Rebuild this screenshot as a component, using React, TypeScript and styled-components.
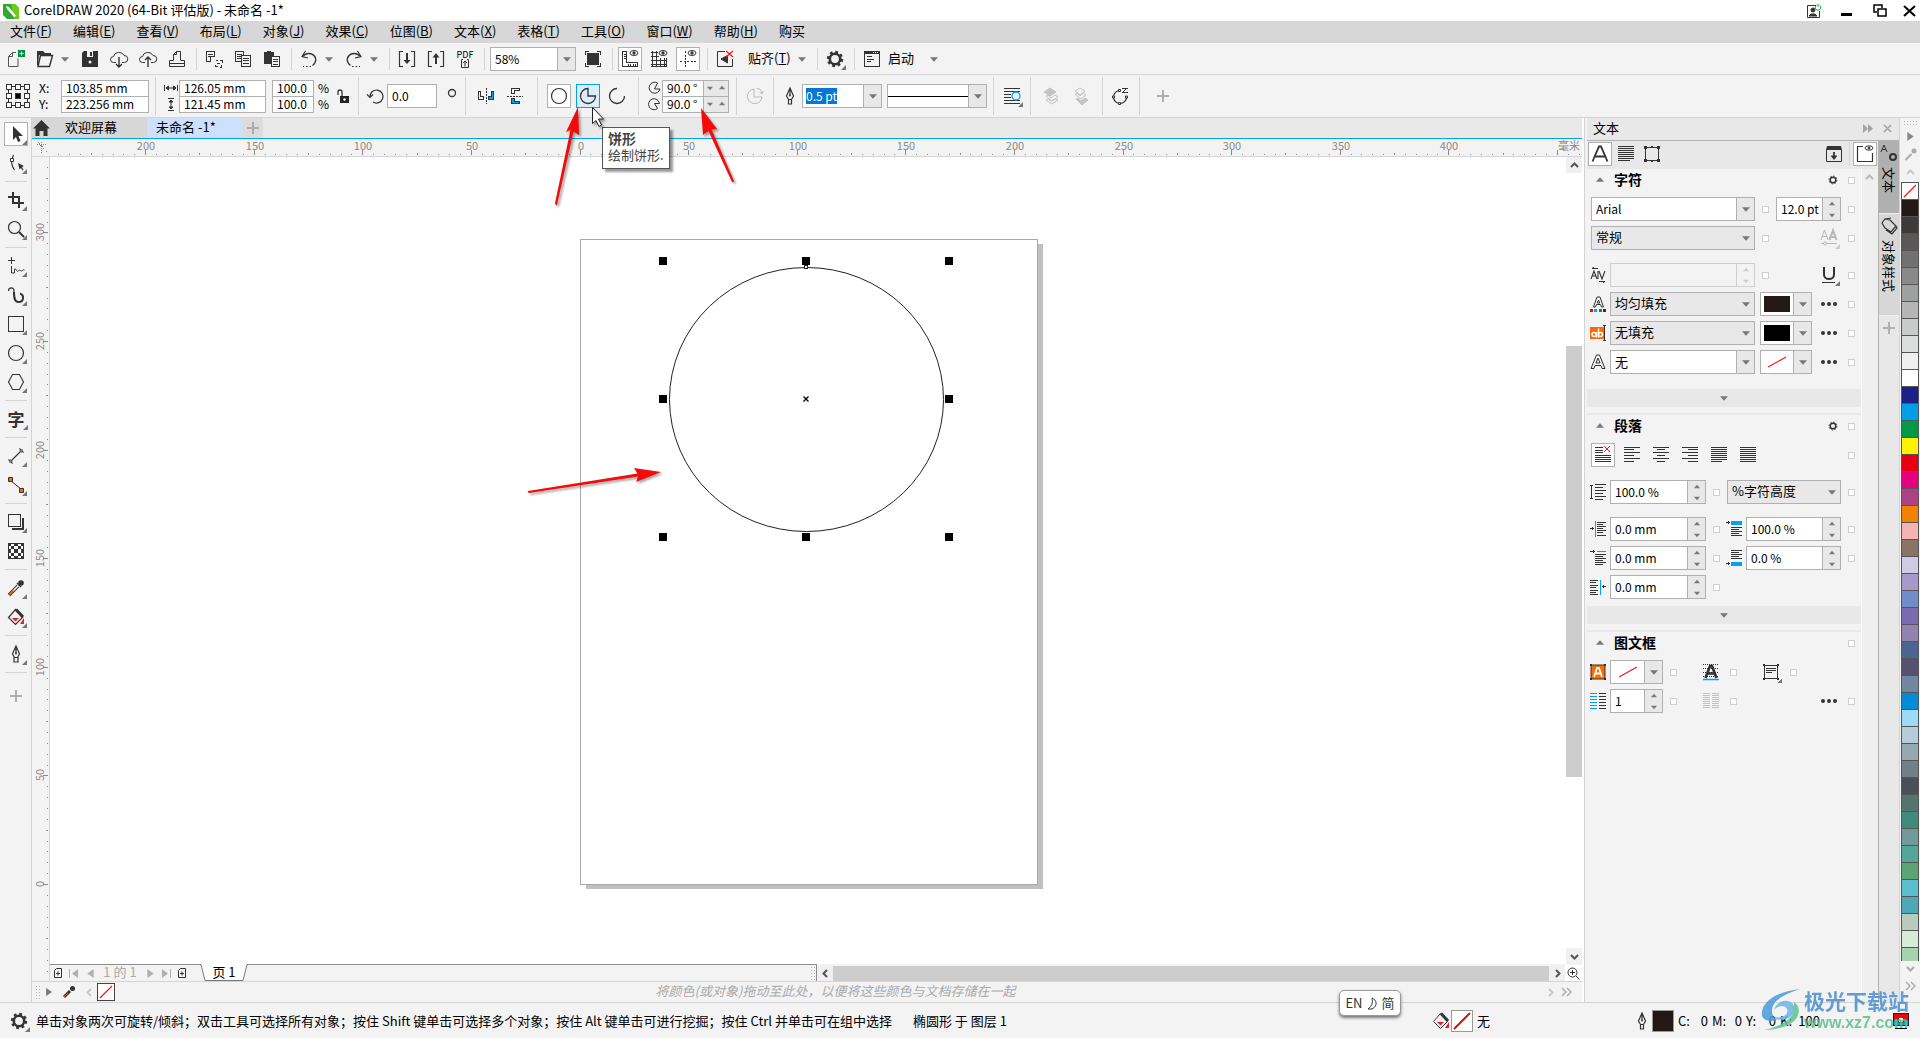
import React from 'react';
import styled, { createGlobalStyle, css } from 'styled-components';

const INK = '#333333';
const LINE = '#b0b0b0';
const RULE = '#d4d4d4';
const BAR = '#f3f3f3';
const SOFT = '#e8e8e8';
const BLUE = '#00a2f8';
const RED = '#ee1c1c';

const Global = createGlobalStyle`
  *, *::before, *::after { box-sizing: border-box; }
  body { margin: 0; background: ${BAR}; overflow: hidden; }
  body, button, input, select {
    font-family: "Noto Sans CJK SC", "Open Sans", sans-serif;
    font-size: 13px;
    line-height: 18px;
    color: #000;
  }
  button, input, select { margin: 0; padding: 0; border: 0; border-radius: 0; background: none; outline: none; }
  h1, h2, p { margin: 0; font-size: inherit; font-weight: inherit; }
  svg { display: block; flex: none; }
`;

const Shell = styled.div`
  position: relative;
  height: 100vh;
  display: flex;
  flex-direction: column;
  background: ${BAR};
  white-space: nowrap;
`;

/* ---------- icons ---------- */

type IconProps = { children: React.ReactNode; size?: number; crisp?: boolean; color?: string };
const Icon = ({ children, size = 24, crisp, color = INK }: IconProps) => (
  <svg
    width={size}
    height={size}
    viewBox={`0 0 ${size} ${size}`}
    fill="none"
    stroke={color}
    shapeRendering={crisp ? 'crispEdges' : undefined}
    aria-hidden="true"
  >
    {children}
  </svg>
);

const Corner = () => <path d="M23 18v5h-5z" fill="#777" stroke="none" />;

const lines = (rows: number[][], w = 1, c?: string) => (
  <path d={rows.map(([x, y, l]) => `M${x} ${y + 0.5}h${l}`).join('')} strokeWidth={w} stroke={c} />
);

const I = {
  newDoc: (
    <Icon>
      <path d="M12 5.500H8.500L4.500 9.500v10h9.500v-8M8.500 5.500v4h-4" stroke="#555" />
      <rect x="14" y="3" width="7" height="7" fill="#00923f" stroke="none" />
      <path d="M17.500 4.500v4M15.500 6.500h4" stroke="#fff" />
    </Icon>
  ),
  open: (
    <Icon>
      <path d="M4 4h6l2 2h6v2H6l-1 10H4z" fill={INK} stroke="none" />
      <path d="M7.500 8.500h12l-3 11H5z" fill={BAR} strokeWidth="1.400" />
    </Icon>
  ),
  save: (
    <Icon>
      <path d="M6 4h14v16H4V6z" fill={INK} stroke="none" />
      <rect x="9" y="4" width="6" height="6" fill={BAR} stroke="none" />
      <rect x="12" y="5" width="2" height="4" fill={INK} stroke="none" />
      <circle cx="12" cy="15" r="1.500" fill={BAR} stroke="none" />
    </Icon>
  ),
  cloudDown: (
    <Icon>
      <path d="M9 15.500H6.500a3 3 0 0 1 0-6 5.500 5 0 0 1 10.500-1 3.500 3.500 0 0 1 .5 7H15" />
      <path d="M12 10v10M9 17l3 3 3-3" strokeWidth="1.400" />
    </Icon>
  ),
  cloudUp: (
    <Icon>
      <path d="M9 15.500H6.500a3 3 0 0 1 0-6 5.500 5 0 0 1 10.500-1 3.500 3.500 0 0 1 .5 7H15" />
      <path d="M12 20V10M9 13l3-3 3 3" strokeWidth="1.400" />
    </Icon>
  ),
  print: (
    <Icon>
      <path d="M8.500 13.500v-6l3-3h4v9M8 13.500H4.500v6h15v-6H16M4.500 16.500h15M11.500 4.500v3h-3" />
    </Icon>
  ),
  cut: (
    <Icon crisp>
      <path d="M4.500 4.500h8v5h-4v5h-4zM6 7.500h5M6 9.500h3M13.500 13.500h2M18 13.500h2v2M19.500 18v2h-2M15.500 19.500h-2v-2M15 16.500h3" />
    </Icon>
  ),
  copy: (
    <Icon crisp>
      <path d="M4.500 4.500h8v10h-8zM6 7.500h5M6 9.500h5M6 11.500h5" />
      <path d="M10.500 8.500h9v11h-9z" fill={BAR} />
      <path d="M12 11.500h6M12 13.500h6M12 16.500h6" />
    </Icon>
  ),
  paste: (
    <Icon crisp>
      <path d="M4 5h3V4h4v1h3v12H4z" fill={INK} stroke="none" />
      <path d="M11.500 9.500h8v10h-8z" fill={BAR} />
      <path d="M13 12.500h5M13 14.500h5M13 17.500h5" />
    </Icon>
  ),
  undo: (
    <Icon>
      <path d="M6 9c3-3 8-3.500 11-.5 3.500 4 1 8.500-1.500 10" strokeWidth="1.400" />
      <path d="M8.500 4L5 9.500l6 1.500" strokeWidth="1.200" />
      <path d="M14 19.500H6" strokeDasharray="1.500 2" />
    </Icon>
  ),
  redo: (
    <Icon>
      <path d="M18 9c-3-3-8-3.500-11-.5-3.500 4-1 8.500 1.500 10" strokeWidth="1.400" />
      <path d="M15.500 4L19 9.500l-6 1.500" strokeWidth="1.200" />
      <path d="M10 19.500h8" strokeDasharray="1.500 2" />
    </Icon>
  ),
  importI: (
    <Icon>
      <path d="M8 4.500H4.500v15H8M16 4.500h3.500v15H16" strokeWidth="1.200" />
      <path d="M12 6v9" strokeWidth="2" />
      <path d="M8.500 13h7L12 17z" fill={INK} stroke="none" />
    </Icon>
  ),
  exportI: (
    <Icon>
      <path d="M8 4.500H4.500v15H8M16 4.500h3.500v15H16" strokeWidth="1.200" />
      <path d="M12 17V9" strokeWidth="2" />
      <path d="M8.500 10.500h7L12 6z" fill={INK} stroke="none" />
    </Icon>
  ),
  full: (
    <Icon crisp>
      <rect x="6" y="6" width="12" height="12" fill={INK} stroke="none" />
      <path d="M4.500 8V4.500H8M16 4.500h3.500V8M19.500 16v3.500H16M8 19.500H4.500V16" />
    </Icon>
  ),
  rulers: (
    <Icon>
      <path d="M4.500 4.500h4v11h11v4h-15zM6 7.500h2M6 9.500h2M6 11.500h2M10.500 17v2M12.500 17v2M15.500 17v2M17.500 17v2" shapeRendering="crispEdges" />
      <ellipse cx="16" cy="6" rx="4" ry="2.500" />
      <circle cx="16" cy="6" r="1.200" fill={INK} />
    </Icon>
  ),
  grid: (
    <Icon>
      <path d="M4 5.500h7M4 9.500h8M4 13.500h16M4 17.500h16M5.500 4v16M9.500 4v16M13.500 11v9M17.500 11v9M4 19.500h16M19.500 11v9" shapeRendering="crispEdges" />
      <ellipse cx="16" cy="6" rx="4" ry="2.500" />
      <circle cx="16" cy="6" r="1.200" fill={INK} />
    </Icon>
  ),
  guides: (
    <Icon>
      <path d="M9.500 4v16M4 14.500h16" strokeDasharray="2 1.500" shapeRendering="crispEdges" />
      <ellipse cx="16" cy="6" rx="4" ry="2.500" />
      <circle cx="16" cy="6" r="1.200" fill={INK} />
    </Icon>
  ),
  snapOff: (
    <Icon>
      <path d="M12 4.500H4.500v15h15V12" />
      <path d="M14.500 8.500L8 12l6.500 4z" fill={INK} />
      <path d="M13 4l7 6M20 4l-7 6" stroke={RED} strokeWidth="1.300" />
    </Icon>
  ),
  gear: (
    <Icon>
      <circle cx="12" cy="12" r="5.200" strokeWidth="2.600" />
      <circle cx="12" cy="12" r="7" strokeWidth="2.400" strokeDasharray="2.750 2.750" />
      <Corner />
    </Icon>
  ),
  launch: (
    <Icon crisp>
      <path d="M4.500 4.500h15v15h-15z" />
      <rect x="4" y="4" width="16" height="3" fill={INK} stroke="none" />
      <path d="M13 5.500h1M15 5.500h1M17 5.500h1" stroke="#fff" />
      <path d="M7 9.500h5M7 12.500h7M7 14.500h4" />
    </Icon>
  ),
  origin: (
    <Icon crisp>
      <path d="M2.500 2.500h19v19h-19z" />
      {[0, 9, 18].map((x) => [0, 9, 18].map((y) => (
        <rect key={`${x}-${y}`} x={x + 0.5} y={y + 0.5} width="5" height="5" fill={x === 9 && y === 9 ? '#000' : '#fff'} />
      )))}
    </Icon>
  ),
  lock: (
    <Icon>
      <rect x="9" y="12" width="9" height="7" fill="#222" stroke="none" />
      <path d="M7 11V8a2 2 0 0 1 4 0v4" strokeWidth="1.300" />
      <circle cx="13.500" cy="15.500" r="1.200" fill="#fff" stroke="none" />
    </Icon>
  ),
  rotate: (
    <Icon>
      <path d="M7 13a6.500 6.500 0 1 1 3 5" strokeWidth="1.200" />
      <path d="M4 10.500l3 3 3-3" strokeWidth="1.200" />
    </Icon>
  ),
  ring: <Icon><circle cx="12" cy="9" r="3.500" strokeWidth="1.300" /></Icon>,
  mirrorH: (
    <Icon crisp>
      <path d="M4.500 7.500h2v5h3v3h-5z" />
      <path d="M19.500 7.500h-2v5h-3v3h5z" fill={BLUE} />
      <path d="M12.500 4v16" strokeDasharray="2 1" />
    </Icon>
  ),
  mirrorV: (
    <Icon crisp>
      <path d="M8.500 4.500h8v2h-5v3h-3z" />
      <path d="M8.500 19.500h8v-2h-5v-3h-3z" fill={BLUE} />
      <path d="M4 12.500h16" strokeDasharray="2 1" />
    </Icon>
  ),
  ellipse: <Icon><circle cx="12" cy="12" r="7.500" strokeWidth="1.200" /></Icon>,
  pie: <Icon><path d="M12 4.500a7.500 7.500 0 1 0 7.500 7.500H12z" strokeWidth="1.300" /></Icon>,
  arc: <Icon><path d="M12 4.500a7.500 7.500 0 1 0 7.500 7.500" strokeWidth="1.300" /></Icon>,
  angA: <Icon size={16}><path d="M10.500 3a5.500 5.500 0 1 0 2.500 6H7.500z" /></Icon>,
  angB: <Icon size={16}><path d="M12.500 7.500a5.500 5.500 0 1 0-2 5L7.500 7.500z" /></Icon>,
  dir: (
    <Icon color="#bbb">
      <path d="M11 5a7.300 7.300 0 1 0 8 8h-8zM14 4.500c3 0 5 2 5 5M16.500 8l2.500 2 1.500-3" />
    </Icon>
  ),
  pen: (
    <Icon>
      <path d="M12 4l-3.500 8 2 3.500h3l2-3.500zM12 4v7M10.500 15.500h3V20h-3z" strokeWidth="1.200" />
      <circle cx="12" cy="11.500" r="1" fill={INK} stroke="none" />
    </Icon>
  ),
  wrap: (
    <Icon>
      <g shapeRendering="crispEdges">{lines([[4, 4, 16], [4, 7, 16], [4, 10, 7], [4, 13, 7], [4, 16, 16], [4, 19, 16]])}</g>
      <rect x="11" y="8" width="10" height="8" fill={BAR} stroke="none" />
      <circle cx="16" cy="12" r="4" stroke={BLUE} strokeWidth="1.300" />
      <Corner />
    </Icon>
  ),
  front: (
    <Icon color="#c4c4c4">
      <path d="M11 4l6 4-6 4-6-4z" fill="#c4c4c4" />
      <path d="M7 12l2-1 3 3 4-3 3 2-6 4zM7 16l2-1 3 2 4-2 3 1-6 4z" />
    </Icon>
  ),
  back: (
    <Icon color="#c4c4c4">
      <path d="M11 4l5 3-5 4-5-4zM6 10l2-1 3 3 3-3 3 2-5 4z" />
      <path d="M7 15l2-1 3 3 4-3 3 2-6 5z" fill="#c4c4c4" />
    </Icon>
  ),
  convert: (
    <Icon>
      <path d="M12 6.500a6.500 6.500 0 1 0 6.500 6.500" strokeWidth="1.200" />
      <path d="M14 4.500h6M14 8.500h6M15 8l4-4" />
      <path d="M10.500 5.500h2v2h-2zM4.500 12h2v2h-2zM10.500 18.500h2v2h-2zM17.500 12h2v2h-2z" fill={BAR} />
    </Icon>
  ),
  plus: <Icon color="#b0b0b0"><path d="M12 6v12M6 12h12" strokeWidth="2" /></Icon>,
  pick: (
    <Icon>
      <path d="M9 4v14l3-3 2 5 2.500-1-2-5H19z" fill={INK} stroke="none" />
      <Corner />
    </Icon>
  ),
  shape: (
    <Icon>
      <path d="M9.500 4c-2.500 5-2 11 1 15" strokeWidth="1.200" />
      <path d="M6.500 7.500h3v3h-3z" fill="#fff" />
      <path d="M14 12l6 3-2 1 1.500 3-1 .5-1.500-2.500-1.500 1.500z" fill={INK} stroke="none" />
      <Corner />
    </Icon>
  ),
  crop: (
    <Icon>
      <path d="M9 4v11h11M4 9h11v11" strokeWidth="2" shapeRendering="crispEdges" />
      <Corner />
    </Icon>
  ),
  zoom: (
    <Icon>
      <circle cx="10.500" cy="10.500" r="6" strokeWidth="1.200" />
      <path d="M15 15l5 5" strokeWidth="2" />
      <Corner />
    </Icon>
  ),
  freehand: (
    <Icon>
      <path d="M7.500 3v7M4 6.500h7M7.500 12v7h3v-4c2-1 2.500 4 4 2s2 0 3 0 2-2 3-1" />
      <Corner />
    </Icon>
  ),
  artistic: (
    <Icon>
      <path d="M4.500 8c0-4 5.500-4.500 5.500 0 0 2 0 3 .5 6" strokeWidth="1.200" />
      <path d="M10 9c0 6 .5 10 4.500 10 5.500 0 6-7 1.500-8.500" strokeWidth="2" />
      <Corner />
    </Icon>
  ),
  rect: <Icon><path d="M4.500 4.500h15v15h-15z" strokeWidth="1" shapeRendering="crispEdges" /><Corner /></Icon>,
  ell: <Icon><circle cx="12" cy="12" r="7.500" strokeWidth="1.200" /><Corner /></Icon>,
  poly: <Icon><path d="M8.500 4.500h7l4 7.500-4 7.500h-7L4.500 12z" strokeWidth="1.100" /><Corner /></Icon>,
  dim: (
    <Icon>
      <path d="M6 18L18 6M4.500 15.500l4 4M15.500 4.500l4 4" strokeWidth="1.100" />
      <path d="M5 19l1-4 3 3zM19 5l-4 1 3 3z" fill="#777" stroke="none" />
      <Corner />
    </Icon>
  ),
  conn: (
    <Icon>
      <path d="M7 8l10 8" />
      <path d="M4.500 4.500h4v4h-4zM15.500 15.500h4v4h-4z" fill="#ff6a00" />
      <Corner />
    </Icon>
  ),
  shadow: (
    <Icon>
      <path d="M19 8v11H8" strokeWidth="2" shapeRendering="crispEdges" />
      <path d="M4.500 4.500h12v12h-12z" shapeRendering="crispEdges" />
      <Corner />
    </Icon>
  ),
  checker: (
    <Icon crisp>
      <path d="M4.500 4.500h15v15h-15z" fill="#fff" />
      {[0, 1, 2, 3, 4].map((r) => [0, 1, 2, 3, 4].map((c) => ((r + c) % 2 === 0 ? (
        <rect key={`${r}${c}`} x={4 + c * 3.2} y={4 + r * 3.2} width="3.200" height="3.200" fill={INK} stroke="none" />
      ) : null)))}
    </Icon>
  ),
  dropper: (
    <Icon>
      <path d="M5 19l9-9" strokeWidth="3.500" />
      <path d="M9 15l6-6" stroke="#fff" strokeWidth="1.500" />
      <path d="M5.500 18.500l4-4" stroke="#e8641b" strokeWidth="2" />
      <circle cx="17" cy="7" r="2.800" fill={INK} stroke="none" />
      <path d="M13 7l4 4" strokeWidth="1.500" />
      <Corner />
    </Icon>
  ),
  bucket: (
    <Icon>
      <path d="M11.500 4.500l-7 8 7 7 7-7z" strokeWidth="1.200" />
      <path d="M12 4.500l7 7.500" strokeWidth="3" />
      <path d="M8 13h7l-3.500 3.500z" fill={RED} stroke="none" />
      <path d="M20 13v6h-4z" fill={RED} stroke="none" />
      <Corner />
    </Icon>
  ),
  outline: (
    <Icon>
      <path d="M12 4l-3.500 8 2 3.500h3l2-3.500zM12 4v7M10 15.500h4V20h-4z" strokeWidth="1.200" />
      <circle cx="12" cy="11.500" r="1" fill={INK} stroke="none" />
      <Corner />
    </Icon>
  ),
};

/* ---------- shared controls ---------- */

const IconButton = styled.button<{ $mode?: 'boxed' | 'hot'; $l?: number; $r?: number }>`
  width: 24px;
  height: 24px;
  flex: none;
  display: flex;
  align-items: center;
  justify-content: center;
  margin-left: ${(p) => p.$l ?? 0}px;
  margin-right: ${(p) => p.$r ?? 0}px;
  ${(p) => p.$mode && css`
    background: ${p.$mode === 'hot' ? '#dcedfb' : '#fff'};
    border: 1px solid ${p.$mode === 'hot' ? BLUE : LINE};
  `}
`;

const Sep = styled.span<{ $h: number; $l: number; $r: number }>`
  flex: none;
  width: 1px;
  height: ${(p) => p.$h}px;
  margin: 0 ${(p) => p.$r}px 0 ${(p) => p.$l}px;
  background: ${RULE};
`;

type Dir = 'up' | 'down' | 'left' | 'right';
const triPath: Record<Dir, string> = {
  down: 'M0 2h7L3.500 6z',
  up: 'M0 5h7L3.500 1z',
  left: 'M6 0v7L1 3.500z',
  right: 'M1 0v7l5-3.500z',
};
const Tri = ({ dir = 'down', size = 8, color = '#777' }: { dir?: Dir; size?: number; color?: string }) => (
  <svg width={size} height={size} viewBox="0 0 7 7" aria-hidden="true"><path d={triPath[dir]} fill={color} /></svg>
);

const chev: Record<Dir, string> = {
  down: 'M1 3l3.500 3.500L8 3',
  up: 'M1 6l3.500-3.500L8 6',
  left: 'M6 1L2.500 4.500 6 8',
  right: 'M3 1l3.500 3.500L3 8',
};
const Chevron = ({ dir, color = '#555' }: { dir: Dir; color?: string }) => (
  <svg width="9" height="9" viewBox="0 0 9 9" fill="none" stroke={color} strokeWidth="2" aria-hidden="true"><path d={chev[dir]} /></svg>
);

const Arrow = styled.button<{ $r?: number }>`
  width: 16px;
  height: 20px;
  flex: none;
  margin-right: ${(p) => p.$r ?? 5}px;
  display: flex;
  align-items: center;
  justify-content: center;
`;

const Box = styled.span<{ $w: number; $muted?: boolean; $flat?: boolean }>`
  flex: none;
  width: ${(p) => p.$w}px;
  height: 24px;
  display: flex;
  align-items: stretch;
  background: ${(p) => (p.$flat ? BAR : p.$muted ? SOFT : '#fff')};
  border: 1px solid ${(p) => (p.$flat ? '#cfcfcf' : LINE)};
`;

const TextInput = styled.input<{ $size?: number }>`
  flex: 1;
  width: 0;
  min-width: 0;
  padding-left: 4px;
  font-size: ${(p) => p.$size ?? 12}px;
`;

const Drop = styled.button`
  width: 18px;
  flex: none;
  background: ${SOFT};
  border-left: 1px solid ${LINE};
  display: flex;
  align-items: center;
  justify-content: center;
`;

const Spin = styled.span<{ $faint?: boolean }>`
  width: 18px;
  flex: none;
  display: flex;
  flex-direction: column;
  background: ${(p) => (p.$faint ? BAR : SOFT)};
  border-left: 1px solid ${(p) => (p.$faint ? '#cfcfcf' : LINE)};
  button { flex: 1; display: flex; align-items: center; justify-content: center; }
`;

const SelectEl = styled.select`
  appearance: none;
  flex: 1;
  min-width: 0;
  padding: 0 0 2px 4px;
  margin-right: -16px;
`;
const SelectArrow = styled.span`
  width: 16px;
  display: flex;
  align-items: center;
  justify-content: center;
  pointer-events: none;
`;

const Select = ({ w, label, value }: { w: number; label: string; value: string }) => (
  <Box $w={w} $muted>
    <SelectEl aria-label={label} defaultValue={value}><option>{value}</option></SelectEl>
    <SelectArrow><Tri /></SelectArrow>
  </Box>
);

const Combo = ({ w, label, value, size }: { w: number; label: string; value: string; size?: number }) => (
  <Box $w={w}>
    <TextInput aria-label={label} defaultValue={value} $size={size} />
    <Drop aria-label={`${label} 列表`}><Tri /></Drop>
  </Box>
);

const Spinner = ({ w, label, value, disabled }: { w: number; label: string; value: string; disabled?: boolean }) => (
  <Box $w={w} $flat={disabled}>
    <TextInput aria-label={label} defaultValue={value} disabled={disabled} />
    <Spin $faint={disabled}>
      <button aria-label={`${label} +`}><Tri dir="up" size={6} color={disabled ? '#ccc' : '#777'} /></button>
      <button aria-label={`${label} -`}><Tri size={6} color={disabled ? '#ccc' : '#777'} /></button>
    </Spin>
  </Box>
);

const Stack = styled.span<{ $w: number }>`
  flex: none;
  width: ${(p) => p.$w}px;
  height: 33px;
  display: flex;
  flex-direction: column;
  background: #fff;
  border: 1px solid ${LINE};
  > * { flex: 1; min-height: 0; width: 100%; }
  > * + * { border-top: 1px solid ${LINE}; }
`;

const SideLabels = styled.span<{ $w: number; $l?: number }>`
  flex: none;
  width: ${(p) => p.$w}px;
  height: 32px;
  margin-left: ${(p) => p.$l ?? 0}px;
  display: flex;
  flex-direction: column;
  font-size: 12px;
  line-height: 16px;
`;

const AngleRow = styled.span`
  display: flex;
  button { width: 12px; background: ${SOFT}; display: flex; align-items: center; justify-content: center; }
  button:first-of-type { border-left: 1px solid ${LINE}; width: 13px; }
`;

/* ---------- title, menu, toolbars ---------- */

const TitleBar = styled.header`
  height: 21px;
  flex: none;
  display: flex;
  align-items: center;
  gap: 5px;
  padding: 0 2px 0 3px;
  background: #fff;
  > span { padding-bottom: 1px; }
`;
const WindowButtons = styled.div`
  margin-left: auto;
  display: flex;
  align-items: center;
  gap: 15px;
  button { width: 18px; height: 20px; display: flex; align-items: center; justify-content: center; }
  button:last-child { margin-left: -4px; }
`;

const MenuBar = styled.nav`
  height: 22px;
  flex: none;
  display: flex;
  align-items: center;
  padding: 0 0 2px 10px;
  gap: 21px;
  background: #d7d7d7;
`;

const ToolBar = styled.div`
  height: 32px;
  flex: none;
  display: flex;
  align-items: center;
  padding-left: 4px;
  border-bottom: 1px solid ${RULE};
`;
const TextButton = styled.button<{ $w: number }>`
  width: ${(p) => p.$w}px;
  height: 24px;
  flex: none;
  padding-bottom: 2px;
  text-align: left;
`;
const PdfGlyph = styled.span`
  display: flex;
  flex-direction: column;
  align-items: center;
  font-size: 9px;
  line-height: 9px;
`;

const PropBar = styled.div`
  height: 43px;
  flex: none;
  display: flex;
  align-items: center;
  padding-left: 6px;
  border-bottom: 1px solid ${RULE};
`;
const SelectedInput = styled.input`
  width: 31px;
  height: 16px;
  align-self: center;
  margin: 0 auto 0 3px;
  font-size: 12px;
  line-height: 16px;
  background: #0078d7;
  color: #fff;
`;
const LineSample = styled.span`
  flex: 1;
  height: 1px;
  align-self: center;
  background: #000;
`;

const menus: [string, string?][] = [
  ['文件', 'F'], ['编辑', 'E'], ['查看', 'V'], ['布局', 'L'], ['对象', 'J'], ['效果', 'C'], ['位图', 'B'],
  ['文本', 'X'], ['表格', 'T'], ['工具', 'O'], ['窗口', 'W'], ['帮助', 'H'], ['购买'],
];

const B = ({ name, icon, mode, l, r = 5 }: { name: string; icon: React.ReactNode; mode?: 'boxed' | 'hot'; l?: number; r?: number }) => (
  <IconButton aria-label={name} $mode={mode} $l={l} $r={r}>{icon}</IconButton>
);
const TSep = () => <Sep $h={22} $l={2} $r={5} />;

const Logo = () => (
  <svg width="16" height="16" viewBox="0 0 16 16" aria-hidden="true">
    <path d="M0 1h12l4 4v11H4l-4-4z" fill="#2faa2f" />
    <path d="M8 1h4l4 4v11h-5z" fill="#6fca1f" />
    <path d="M3 3l3 1 7 9-2 1-7-8z" fill="#fff" />
  </svg>
);

const StandardBar = () => (
  <ToolBar>
    <B name="新建" icon={I.newDoc} />
    <B name="打开" icon={I.open} r={0} />
    <Arrow aria-label="打开选项"><Tri /></Arrow>
    <B name="保存" icon={I.save} />
    <B name="云下载" icon={I.cloudDown} />
    <B name="云上传" icon={I.cloudUp} />
    <B name="打印" icon={I.print} />
    <TSep />
    <B name="剪切" icon={I.cut} />
    <B name="复制" icon={I.copy} />
    <B name="粘贴" icon={I.paste} />
    <TSep />
    <B name="撤消" icon={I.undo} r={0} />
    <Arrow aria-label="撤消列表"><Tri /></Arrow>
    <B name="重做" icon={I.redo} r={0} />
    <Arrow aria-label="重做列表"><Tri /></Arrow>
    <TSep />
    <B name="导入" icon={I.importI} />
    <B name="导出" icon={I.exportI} />
    <IconButton aria-label="发布为 PDF" $r={5}>
      <PdfGlyph>
        PDF
        <svg width="8" height="9" viewBox="0 0 8 9" fill="none" stroke={INK}><path d="M2 .5H.5v8h7v-8H6M4 7.500V2M2 4l2-2 2 2" /></svg>
      </PdfGlyph>
    </IconButton>
    <TSep />
    <Combo w={86} label="缩放级别" value="58%" size={12} />
    <B name="全屏预览" icon={I.full} l={5} />
    <TSep />
    <B name="显示标尺" icon={I.rulers} mode="boxed" />
    <B name="显示网格" icon={I.grid} />
    <B name="显示辅助线" icon={I.guides} mode="boxed" />
    <TSep />
    <B name="关闭贴齐" icon={I.snapOff} r={11} />
    <TextButton $w={46}>贴齐(<u>T</u>)</TextButton>
    <Arrow aria-label="贴齐列表"><Tri /></Arrow>
    <TSep />
    <B name="选项" icon={I.gear} />
    <TSep />
    <B name="启动器" icon={I.launch} r={4} />
    <TextButton $w={38}>启动</TextButton>
    <Arrow aria-label="启动列表"><Tri /></Arrow>
  </ToolBar>
);

const PropertyBar = () => (
  <PropBar>
    <B name="对象原点" icon={I.origin} r={9} />
    <SideLabels $w={22}><span>X:</span><span>Y:</span></SideLabels>
    <Stack $w={88}>
      <TextInput aria-label="X" defaultValue="103.85 mm" />
      <TextInput aria-label="Y" defaultValue="223.256 mm" />
    </Stack>
    <Sep $h={38} $l={6} $r={8} />
    <SideLabels $w={15}>
      <svg width="14" height="16" viewBox="0 0 14 16" stroke={INK} fill={INK}><path d="M.5 5v6M13.500 5v6M2 8h10M4.500 6v4L2 8zM9.500 6v4L12 8z" /></svg>
      <svg width="14" height="16" viewBox="0 0 14 16" stroke={INK} fill={INK}><path d="M4 2.500h6M4 14.500h6M7 4v9M5 6h4L7 4zM5 11h4l-2 2z" /></svg>
    </SideLabels>
    <Stack $w={87}>
      <TextInput aria-label="宽度" defaultValue="126.05 mm" />
      <TextInput aria-label="高度" defaultValue="121.45 mm" />
    </Stack>
    <Sep $h={0} $l={5} $r={0} />
    <Stack $w={42}>
      <TextInput aria-label="水平缩放" defaultValue="100.0" />
      <TextInput aria-label="垂直缩放" defaultValue="100.0" />
    </Stack>
    <SideLabels $w={13} $l={4}><span>%</span><span>%</span></SideLabels>
    <B name="锁定比率" icon={I.lock} r={0} />
    <Sep $h={38} $l={3} $r={4} />
    <B name="旋转" icon={I.rotate} r={0} />
    <Box $w={50}><TextInput aria-label="旋转角度" defaultValue="0.0" /></Box>
    <B name="角度" icon={I.ring} l={3} r={0} />
    <Sep $h={38} $l={1} $r={8} />
    <B name="水平镜像" icon={I.mirrorH} />
    <B name="垂直镜像" icon={I.mirrorV} r={0} />
    <Sep $h={38} $l={10} $r={9} />
    <B name="椭圆形" icon={I.ellipse} mode="boxed" />
    <B name="饼形" icon={I.pie} mode="hot" />
    <B name="弧" icon={I.arc} r={0} />
    <Sep $h={38} $l={9} $r={8} />
    <SideLabels $w={15}>{I.angA}{I.angB}</SideLabels>
    <Stack $w={67}>
      {['起始角度', '结束角度'].map((n) => (
        <AngleRow key={n}>
          <TextInput aria-label={n} defaultValue="90.0 °" />
          <button aria-label={`${n} -`}><Tri size={6} /></button>
          <button aria-label={`${n} +`}><Tri size={6} dir="up" /></button>
        </AngleRow>
      ))}
    </Stack>
    <Sep $h={38} $l={7} $r={6} />
    <B name="更改方向" icon={I.dir} r={0} />
    <Sep $h={38} $l={6} $r={4} />
    <B name="轮廓笔" icon={I.pen} r={0} />
    <Box $w={80}>
      <SelectedInput aria-label="轮廓宽度" defaultValue="0.5 pt" />
      <Drop aria-label="轮廓宽度列表"><Tri /></Drop>
    </Box>
    <Sep $h={0} $l={4} $r={0} />
    <Box $w={100}><LineSample /><Drop aria-label="线条样式"><Tri /></Drop></Box>
    <Sep $h={38} $l={6} $r={6} />
    <B name="文本换行" icon={I.wrap} r={0} />
    <Sep $h={38} $l={6} $r={8} />
    <B name="到图层前面" icon={I.front} r={6} />
    <B name="到图层后面" icon={I.back} r={0} />
    <Sep $h={38} $l={9} $r={5} />
    <B name="转换为曲线" icon={I.convert} r={0} />
    <Sep $h={38} $l={7} $r={11} />
    <B name="自定义" icon={I.plus} />
  </PropBar>
);

/* ---------- workspace ---------- */

const Workspace = styled.div`
  flex: 1;
  min-height: 0;
  display: flex;
  border-bottom: 1px solid ${RULE};
`;

const Toolbox = styled.aside`
  width: 32px;
  flex: none;
  padding: 4px 3px 0 4px;
  border-right: 1px solid ${RULE};
  display: flex;
  flex-direction: column;
  gap: 5px;
  > button:last-child { margin-top: 5px; }
`;
const ToolSep = styled.span`
  height: 1px;
  flex: none;
  margin: 1px 0 1px 1px;
  width: 22px;
  background: ${RULE};
`;
const TextGlyph = styled.span`
  position: relative;
  font-size: 17px;
  font-weight: 700;
  line-height: 24px;
  color: ${INK};
  svg { position: absolute; left: -3px; top: 0; }
`;

const Center = styled.main`
  flex: 1;
  min-width: 0;
  display: flex;
  flex-direction: column;
`;

const DocTabs = styled.div`
  height: 21px;
  flex: none;
  display: flex;
  background: #e9e9e9;
  border-bottom: 1px solid ${BLUE};
  button { height: 20px; text-align: left; background: #d7d7d7; }
`;
const HomeTab = styled.button` width: 24px; padding-left: 1px; `;
const Tab = styled.button<{ $w: number; $on?: boolean }>`
  && { background: ${(p) => (p.$on ? '#cde1ff' : '#d7d7d7')}; }
  width: ${(p) => p.$w}px;
  padding: 0 0 2px 9px;
`;
const AddTab = styled.button`
  && { background: #dcdcdc; }
  width: 21px;
  svg { margin: 0 auto; }
`;

const RulerRow = styled.div`
  height: 18px;
  flex: none;
  border-bottom: 1px solid ${RULE};
  svg { overflow: visible; }
`;
const RulerText = styled.text`
  font-size: 11px;
  fill: #8a8a8a;
  stroke: none;
  text-anchor: middle;
`;
const Stage = styled.div`
  flex: 1;
  min-height: 0;
  display: flex;
`;
const VRuler = styled.div`
  width: 18px;
  flex: none;
  border-right: 1px solid ${RULE};
`;
const StageMain = styled.div`
  flex: 1;
  min-width: 0;
  display: flex;
  flex-direction: column;
`;
const CanvasRow = styled.div`
  flex: 1;
  min-height: 0;
  display: flex;
  background: #fff;
`;
const Canvas = styled.div`
  flex: 1;
  min-width: 0;
  overflow: hidden;
`;
const VScroll = styled.div`
  width: 16px;
  flex: none;
  display: flex;
  flex-direction: column;
`;
const ScrollButton = styled.button`
  width: 16px;
  height: 16px;
  flex: none;
  display: flex;
  align-items: center;
  justify-content: center;
  background: #f0f0f0;
`;
const VTrack = styled.div`
  flex: 1;
  display: flex;
  flex-direction: column;
  &::before { content: ''; flex: 173; }
  &::after { content: ''; flex: 171; }
  i { flex: 430; background: #cdcdcd; }
`;

const PageBar = styled.div`
  height: 17px;
  flex: none;
  display: flex;
`;
const PageNav = styled.div`
  width: 767px;
  flex: none;
  display: flex;
  align-items: center;
  border-top: 1px solid #8c8c8c;
  border-right: 1px solid #8c8c8c;
  button { width: 16px; height: 16px; flex: none; display: flex; align-items: center; justify-content: center; }
`;
const PageCount = styled.span`
  width: 44px;
  padding-bottom: 2px;
  text-align: center;
  line-height: 14px;
  color: #aaa;
`;
const PageTab = styled.button`
  && { width: 48px; margin: -1px 0 0 10px; height: 17px; }
  position: relative;
  svg { position: absolute; left: 0; top: 0; }
  span { position: relative; padding-bottom: 2px; line-height: 14px; }
`;
const HThumb = styled.i`
  flex: 1;
  height: 15px;
  background: #cdcdcd;
`;
const HScroll = styled.div`
  flex: 1;
  display: flex;
  align-items: flex-end;
`;
const Navigator = styled.button`
  width: 17px;
  height: 16px;
  background: #fff;
  display: flex;
  align-items: center;
  justify-content: center;
`;

const ColorRow = styled.div`
  height: 21px;
  flex: none;
  display: flex;
  align-items: center;
  border-top: 1px solid ${RULE};
  padding: 0 10px 0 3px;
  p { flex: 1; padding: 0 0 2px 14px; text-align: center; font-style: italic; color: #aaa; }
`;
const DropperButton = styled.button`
  width: 24px;
  height: 20px;
  flex: none;
  display: flex;
  align-items: center;
  justify-content: center;
`;
const Grip = styled.span`
  width: 6px;
  height: 15px;
  flex: none;
  background: radial-gradient(circle, #b4b4b4 1px, transparent 1px) 0 0 / 3px 3px;
`;
const NoneSwatch = styled.button`
  width: 18px;
  height: 18px;
  flex: none;
  background: #fff;
  border: 1px solid #444;
`;
const Slash = ({ w, h, color = RED, sw = 1.2 }: { w: number; h: number; color?: string; sw?: number }) => (
  <svg width={w} height={h} viewBox={`0 0 ${w} ${h}`} stroke={color} strokeWidth={sw} aria-hidden="true"><path d={`M2 ${h - 2}L${w - 2} 2`} /></svg>
);

const STEP = 10.86;

const HRuler = () => {
  const zero = 548.5;
  const ticks = Array.from({ length: 144 }, (_, i) => i - 48).filter((i) => zero + i * STEP > 22 && i < 93);
  return (
    <svg width="100%" height="17" stroke="#8a8a8a" shapeRendering="crispEdges">
      <path d="M5 5.500h9M9.500 3v12M6 3l9 10" strokeDasharray="1 1" />
      {ticks.map((i) => {
        const x = Math.round(zero + i * STEP) - 0.5;
        const major = i % 10 === 0;
        return <path key={i} d={`M${x} ${major ? 11 : i % 5 === 0 ? 14 : 15}V16`} />;
      })}
      {ticks.filter((i) => i % 10 === 0 && i < 90).map((i) => (
        <RulerText key={i} x={Math.round(zero + i * STEP)} y="11">{Math.abs(i * 5)}</RulerText>
      ))}
      <RulerText x="1537" y="11">毫米</RulerText>
    </svg>
  );
};

const VerticalRuler = () => {
  const zero = 727;
  const ticks = Array.from({ length: 80 }, (_, i) => i - 8).filter((i) => zero - i * STEP > 6);
  return (
    <svg width="17" height="100%" stroke="#8a8a8a" shapeRendering="crispEdges">
      {ticks.map((i) => {
        const y = Math.round(zero - i * STEP) + 0.5;
        return <path key={i} d={`M${i % 10 === 0 ? 11 : i % 5 === 0 ? 14 : 15} ${y}H16`} />;
      })}
      {ticks.filter((i) => i % 10 === 0).map((i) => {
        const y = Math.round(zero - i * STEP);
        return <RulerText key={i} transform={`translate(12 ${y}) rotate(-90)`}>{Math.abs(i * 5)}</RulerText>;
      })}
    </svg>
  );
};

const Drawing = () => (
  <svg width="100%" height="100%">
    <rect x="536" y="87" width="457" height="645" fill="#c0c0c0" />
    <rect x="530.5" y="82.5" width="457" height="645" fill="#fff" stroke="#a8a8a8" />
    <ellipse cx="756.5" cy="242.5" rx="137" ry="132" fill="none" stroke="#222" />
    <rect x="754.5" y="108.5" width="3" height="3" fill="#fff" stroke="#222" />
    {[609, 752, 895].map((x) => [100, 238, 376].map((y) => (
      x === 752 && y === 238 ? null : <rect key={`${x}-${y}`} x={x} y={y} width="8" height="8" fill="#000" />
    )))}
    <path d="M753.500 239.500l5 5M758.500 239.500l-5 5" stroke="#000" strokeWidth="1.300" />
  </svg>
);

const tools: (keyof typeof I | '|' | '字')[] = [
  'pick', 'shape', '|', 'crop', 'zoom', '|', 'freehand', 'artistic', 'rect', 'ell', 'poly', '|', '字', '|',
  'dim', 'conn', '|', 'shadow', 'checker', '|', 'dropper', 'bucket', '|', 'outline', '|', 'plus',
];

/* ---------- docker ---------- */

const DockerWrap = styled.aside`
  width: 317px;
  flex: none;
  display: flex;
  flex-direction: column;
  border-left: 2px solid #fff;
  box-shadow: inset 1px 0 0 ${RULE};
  padding-left: 3px;
`;
const DockerHead = styled.header`
  height: 23px;
  flex: none;
  display: flex;
  align-items: center;
  padding: 0 7px 2px 6px;
  gap: 9px;
  background: ${SOFT};
  border-bottom: 1px solid ${LINE};
  h1 { flex: 1; }
`;
const DockerBody = styled.div`
  flex: 1;
  min-height: 0;
  display: flex;
`;
const DockerMain = styled.div`
  flex: 1;
  min-width: 0;
  display: flex;
  flex-direction: column;
  border-right: 1px solid ${LINE};
`;
const ModeBar = styled.div`
  height: 28px;
  flex: none;
  display: flex;
  align-items: flex-start;
  padding: 1px 1px 0;
  background: ${SOFT};
`;
const Push = styled.span` flex: 1; `;
const ScrollArea = styled.div`
  flex: 1;
  min-height: 0;
  display: flex;
`;
const Sections = styled.div`
  flex: 1;
  min-width: 0;
  border-right: 1px solid #fff;
`;
const InnerScroll = styled.div`
  width: 16px;
  flex: none;
  padding: 4px 0 0 3px;
  background: #efefef;
`;
const SectionHead = styled.div`
  height: 22px;
  display: flex;
  align-items: center;
  padding: 0 6px 0 9px;
  gap: 10px;
  h2 { flex: 1; padding-bottom: 2px; font-size: 14px; font-weight: 700; line-height: 20px; }
`;
const Row = styled.div<{ $t?: number; $gap?: number }>`
  height: 24px;
  margin-top: ${(p) => p.$t ?? 5}px;
  padding: 0 6px 0 4px;
  display: flex;
  align-items: center;
  gap: ${(p) => p.$gap ?? 7}px;
`;
const Mark = styled.input.attrs({ type: 'checkbox' })`
  appearance: none;
  width: 7px;
  height: 7px;
  flex: none;
  background: #fff;
  border: 1px solid #d0d0d0;
`;
const End = styled.span`
  margin-left: auto;
  display: flex;
  align-items: center;
  gap: 7px;
`;
const Labeled = styled.span`
  flex: none;
  display: flex;
  align-items: center;
  > svg:first-child { margin: 0 4px 0 -1px; }
`;
const Fold = styled.button<{ $t: number }>`
  display: flex;
  align-items: center;
  justify-content: center;
  width: 100%;
  height: 18px;
  margin-top: ${(p) => p.$t}px;
  background: ${SOFT};
`;
const Divider = styled.div`
  height: 2px;
  margin-top: 6px;
  background: ${SOFT};
`;
const Swatch = styled.span<{ $c?: string }>`
  flex: 1;
  margin: 3px;
  background: ${(p) => p.$c ?? '#fff'};
  svg { margin: 1px auto 0; }
`;
const DockerTabs = styled.div`
  width: 20px;
  flex: none;
  display: flex;
  flex-direction: column;
  background: ${SOFT};
`;
const SideTab = styled.button<{ $h: number; $on?: boolean }>`
  height: ${(p) => p.$h}px;
  flex: none;
  padding-top: 3px;
  display: flex;
  flex-direction: column;
  align-items: center;
  gap: 5px;
  background: ${(p) => (p.$on ? '#b0b0b0' : '#d7d7d7')};
  border-bottom: 1px solid #eee;
  span { writing-mode: vertical-rl; text-orientation: sideways; line-height: 20px; }
`;
const FrameCell = styled.span`
  display: flex;
  align-items: center;
  gap: 7px;
  margin-left: 15px;
`;

const ColorDrop = ({ label, color, w = 52 }: { label: string; color?: string; w?: number }) => (
  <Box $w={w}>
    <Swatch $c={color}>{!color && <Slash w={22} h={14} />}</Swatch>
    <Drop aria-label={label}><Tri /></Drop>
  </Box>
);
const Dots = () => (
  <IconButton aria-label="更多">
    <Icon>{[6, 12, 18].map((x) => <circle key={x} cx={x} cy="12" r="2" fill={INK} stroke="none" />)}</Icon>
  </IconButton>
);
const TinyGear = () => (
  <svg width="10" height="10" viewBox="0 0 10 10" fill="none" stroke={INK}><circle cx="5" cy="5" r="2.800" strokeWidth="1.400" /><circle cx="5" cy="5" r="3.900" strokeDasharray="1.500 1.500" /></svg>
);

const P = {
  kern: <Icon size={16}><path d="M1 12L4 4l3 8M2 9h4M8 4l0 8M9 4l3 8 3-8" strokeWidth="1.100" /><path d="M2 1.500h6M2 1.500l2-1.500M9 14.500h6M15 14.500l-2 1.500" /></Icon>,
  fill: <Icon size={16}><path d="M7 1h3l3.500 10h-2l-1-2.500h-4l-1 2.500h-2zM8.500 4L7.200 7h2.600z" /><path d="M0 13h3v3H0z" fill="red" stroke="none" /><path d="M4 13h3v3H4z" fill="#00a2f8" stroke="none" /><path d="M9 13h3v3H9z" fill="#00923f" stroke="none" /><path d="M13 13h3v3h-3z" fill={INK} stroke="none" /></Icon>,
  back: <Icon size={16}><rect y="2" width="14" height="12" fill="#ff6a00" stroke="none" /><circle cx="4" cy="9.500" r="2" stroke="#fff" strokeWidth="1.500" /><path d="M6.500 7v5.500M8.500 3.500v9" stroke="#fff" strokeWidth="1.500" /><circle cx="10.500" cy="9.500" r="2" stroke="#fff" strokeWidth="1.500" /><path d="M14.500 1v14M13 .5h3M13 15.500h3" /></Icon>,
  outA: <Icon size={16}><path d="M6.500 1h3L15 14.500h-3l-1-3H5l-1 3H1zM8 4L6 9h4z" /></Icon>,
  lead: <Icon size={16} crisp><path d="M1.500 1v14M0 1.500h3M0 14.500h3" />{lines([[5, 0, 11], [5, 3, 8], [5, 6, 11], [5, 9, 8], [5, 12, 11], [5, 15, 8]])}</Icon>,
  indL: <Icon size={16} crisp><path d="M0 7.500h4M2.500 6v3" /><path d="M5.500 0v16" stroke={BLUE} />{lines([[7, 1, 9], [7, 3, 6], [7, 5, 9], [7, 7, 6], [7, 9, 9], [7, 11, 6], [7, 14, 9]])}</Icon>,
  indF: <Icon size={16} crisp><path d="M0 1.500h5M3.500 0v3" />{lines([[7, 1, 9]], 1, BLUE)}{lines([[5, 4, 11], [5, 6, 8], [5, 8, 11], [5, 10, 8], [5, 12, 11], [5, 14, 8]])}</Icon>,
  indR: <Icon size={16} crisp><path d="M12 7.500h4M13.500 6v3" /><path d="M10.500 1v15" stroke={BLUE} />{lines([[0, 1, 8], [0, 3, 6], [0, 6, 8], [0, 8, 6], [0, 11, 8], [0, 13, 6], [0, 15, 8]])}</Icon>,
  before: <Icon size={16} crisp><path d="M0 1.500h4M2.500 0v3" /><rect x="5" y="0" width="11" height="4" fill={BLUE} stroke="none" />{lines([[5, 6, 11], [5, 8, 8], [5, 10, 11], [5, 12, 8], [5, 14, 11]])}</Icon>,
  after: <Icon size={16} crisp><path d="M0 13.500h4M2.500 12v3" /><rect x="5" y="12" width="11" height="4" fill={BLUE} stroke="none" />{lines([[5, 0, 11], [5, 2, 8], [5, 4, 11], [5, 6, 8], [5, 8, 11]])}</Icon>,
  frameFill: <Icon size={16}><rect x="1" y="1" width="14" height="14" fill="#ff6a00" stroke={INK} /><path d="M4 13l3-9h2l3 9M5.500 9.500h5" stroke="#fff" strokeWidth="1.800" /><path d="M0 0h2v2H0zM14 0h2v2h-2zM0 14h2v2H0zM14 14h2v2h-2z" fill={INK} stroke="none" /></Icon>,
  cols: <Icon size={16} crisp>{lines([0, 3, 6, 9, 12, 15].map((y) => [0, y, 7]), 1, BLUE)}{lines([0, 3, 6, 9, 12, 15].map((y) => [9, y, 7]))}</Icon>,
};

/* 0 left, 1 centre, 2 right, 3 justified, 4 fully justified */
const align = (kind: number) => {
  const ys = kind < 3 ? [4, 6, 9, 12, 15, 18] : [4, 6, 8, 10, 12, 14, 16, 18];
  const rows = ys.map((y, i) => {
    const short = i % 2 === 1;
    if (kind === 0) return [4, y, short ? 10 : 16];
    if (kind === 1) return [short ? 8 : 4, y, short ? 8 : 16];
    if (kind === 2) return [short ? 10 : 4, y, short ? 10 : 16];
    return [4, y, kind === 3 && i === 7 ? 11 : 16];
  });
  return <Icon crisp>{lines(rows)}</Icon>;
};

const SwatchRow = ({ icon, field, label, color }: { icon: React.ReactNode; field: React.ReactNode; label: string; color?: string }) => (
  <Row $gap={5}>
    <Labeled>{icon}{field}</Labeled>
    <ColorDrop label={label} color={color} />
    <End><Dots /><Mark aria-label={label} /></End>
  </Row>
);

const TextDocker = () => (
  <DockerWrap>
    <DockerHead>
      <h1>文本</h1>
      <svg width="11" height="9" viewBox="0 0 11 9" fill="#a4a4a4"><path d="M0 0l5 4.500L0 9zM5 0l5 4.500L5 9z" /></svg>
      <svg width="9" height="9" viewBox="0 0 9 9" stroke="#a4a4a4" strokeWidth="1.600"><path d="M1 1l7 7M8 1L1 8" /></svg>
    </DockerHead>
    <DockerBody>
      <DockerMain>
        <ModeBar>
          <B name="字符" mode="boxed" r={2} icon={<Icon><path d="M4.500 19.500L11 4.500h2l6.500 15M7 14.500h10" strokeWidth="1.800" /></Icon>} />
          <B name="段落" r={2} icon={<Icon crisp>{lines([4, 6, 8, 10, 12, 14, 16, 18].map((y) => [4, y, y === 18 ? 12 : 16]))}</Icon>} />
          <B name="图文框" icon={<Icon crisp><path d="M5.500 5.500h13v13h-13z" /><path d="M4 4h3v3H4zM17 4h3v3h-3zM4 17h3v3H4zM17 17h3v3h-3zM11 4h2v2h-2zM11 18h2v2h-2z" fill={INK} stroke="none" /></Icon>} />
          <Push />
          <B name="交互式 OpenType" r={2} icon={<Icon><path d="M4.500 7.500h15v12h-15z" /><path d="M5 4h14l1 4H4z" fill={INK} stroke="none" /><path d="M12 10v6M9.500 13.500L12 16.500l2.500-3" strokeWidth="1.800" /></Icon>} />
          <Sep $h={24} $l={1} $r={3} />
          <B name="预览" mode="boxed" r={0} icon={<Icon><path d="M10 4.500H4.500v15h15V11" strokeWidth="1.200" /><ellipse cx="16" cy="6" rx="4" ry="2.200" /><circle cx="16" cy="6" r="1" fill={INK} /></Icon>} />
        </ModeBar>
        <ScrollArea>
          <Sections>
            <SectionHead>
              <Tri dir="up" /><h2>字符</h2><TinyGear /><Mark aria-label="字符样式" />
            </SectionHead>
            <Row $t={6}>
              <Combo w={164} label="字体" value="Arial" />
              <Mark aria-label="字体样式标记" />
              <Spinner w={65} label="字号" value="12.0 pt" />
              <Mark aria-label="字号样式标记" />
            </Row>
            <Row>
              <Select w={164} label="字型" value="常规" />
              <Mark aria-label="字型样式标记" />
              <End>
                <IconButton aria-label="可变字体"><Icon color="#b8b8b8"><path d="M4 14l3.500-10L11 14M5.500 10.500h4" /><path d="M12.500 14L16 4.500 19.500 14M14 11h4.500" strokeWidth="2" /><path d="M4 17.500h16" /><circle cx="8" cy="17.500" r="1.500" fill={BAR} /><path d="M23 18v5h-5z" fill="#ccc" stroke="none" /></Icon></IconButton>
                <Mark aria-label="可变字体标记" />
              </End>
            </Row>
            <Row $t={13}>
              <Labeled>{P.kern}<Spinner w={145} label="字距" value="" disabled /></Labeled>
              <Mark aria-label="字距标记" />
              <End>
                <IconButton aria-label="下划线"><Icon><path d="M7 4v7.500a5 4.500 0 0 0 10 0V4" strokeWidth="2" /><path d="M5 19.500h13" /><Corner /></Icon></IconButton>
                <Mark aria-label="下划线标记" />
              </End>
            </Row>
            <SwatchRow icon={P.fill} field={<Select w={145} label="填充类型" value="均匀填充" />} label="文本颜色" color="#231815" />
            <SwatchRow icon={P.back} field={<Select w={145} label="背景填充类型" value="无填充" />} label="背景颜色" color="#000" />
            <SwatchRow icon={P.outA} field={<Combo w={145} label="轮廓宽度" value="无" size={13} />} label="轮廓颜色" />
            <Fold $t={15} aria-label="展开字符"><Tri /></Fold>
            <Divider />
            <SectionHead>
              <Tri dir="up" /><h2>段落</h2><TinyGear /><Mark aria-label="段落样式" />
            </SectionHead>
            <Row $t={6} $gap={5}>
              <IconButton aria-label="无对齐" $mode="boxed">
                <Icon crisp>{lines([[4, 4, 8], [4, 7, 8], [4, 9, 8], [4, 12, 16], [4, 14, 16], [4, 16, 16], [4, 18, 16]])}<path d="M13 3l6 6M19 3l-6 6" stroke={RED} shapeRendering="auto" /></Icon>
              </IconButton>
              {['左对齐', '居中', '右对齐', '两端对齐', '强制两端对齐'].map((n, i) => (
                <IconButton key={n} aria-label={n}>{align(i)}</IconButton>
              ))}
              <End><Mark aria-label="对齐标记" /></End>
            </Row>
            <Row $t={13}>
              <Labeled>{P.lead}<Spinner w={96} label="行间距" value="100.0 %" /></Labeled>
              <Mark aria-label="行间距标记" />
              <End>
                <Select w={114} label="间距单位" value="%字符高度" />
                <Mark aria-label="间距单位标记" />
              </End>
            </Row>
            <Row $t={13}>
              <Labeled>{P.indL}<Spinner w={96} label="左缩进" value="0.0 mm" /></Labeled>
              <Mark aria-label="左缩进标记" />
              <End>
                <Labeled>{P.before}<Spinner w={95} label="段前间距" value="100.0 %" /></Labeled>
                <Mark aria-label="段前间距标记" />
              </End>
            </Row>
            <Row>
              <Labeled>{P.indF}<Spinner w={96} label="首行缩进" value="0.0 mm" /></Labeled>
              <Mark aria-label="首行缩进标记" />
              <End>
                <Labeled>{P.after}<Spinner w={95} label="段后间距" value="0.0 %" /></Labeled>
                <Mark aria-label="段后间距标记" />
              </End>
            </Row>
            <Row>
              <Labeled>{P.indR}<Spinner w={96} label="右缩进" value="0.0 mm" /></Labeled>
              <Mark aria-label="右缩进标记" />
            </Row>
            <Fold $t={7} aria-label="展开段落"><Tri /></Fold>
            <Divider />
            <SectionHead>
              <Tri dir="up" /><h2>图文框</h2><Mark aria-label="图文框样式" />
            </SectionHead>
            <Row $t={6}>
              <Labeled>{P.frameFill}<ColorDrop w={53} label="图文框填充" /></Labeled>
              <Mark aria-label="图文框填充标记" />
              <FrameCell>
                <IconButton aria-label="网格对齐"><Icon><path d="M4 4.500h16M4 8.500h16M4 12.500h16M4 16.500h16" strokeDasharray="1 1" shapeRendering="crispEdges" /><path d="M6.500 18l4.500-12h2l4.500 12M8.500 13.500h7" strokeWidth="2.600" /><path d="M4 19.500h16" stroke={BLUE} strokeWidth="1.500" /></Icon></IconButton>
                <Mark aria-label="网格对齐标记" />
              </FrameCell>
              <FrameCell>
                <IconButton aria-label="垂直对齐"><Icon crisp><path d="M5.500 5.500h13v13h-13zM7 8.500h10M7 10.500h10M7 12.500h6" /><path d="M4 4h2v2H4zM18 4h2v2h-2zM4 18h2v2H4zM18 18h2v2h-2z" fill={INK} stroke="none" /><Corner /></Icon></IconButton>
                <Mark aria-label="垂直对齐标记" />
              </FrameCell>
            </Row>
            <Row>
              <Labeled>{P.cols}<Spinner w={53} label="栏数" value="1" /></Labeled>
              <Mark aria-label="栏数标记" />
              <FrameCell>
                <IconButton aria-label="栏宽相等"><Icon crisp color="#c0c0c0">{lines([4, 6, 8, 10, 12, 14, 16, 18].flatMap((y) => [[4, y, 7], [13, y, 7]]))}</Icon></IconButton>
                <Mark aria-label="栏宽标记" />
              </FrameCell>
              <End><Dots /><Mark aria-label="栏标记" /></End>
            </Row>
          </Sections>
          <InnerScroll><Chevron dir="up" color="#b8b8b8" /></InnerScroll>
        </ScrollArea>
      </DockerMain>
      <DockerTabs>
        <SideTab $h={73} $on>
          <svg width="18" height="18" viewBox="0 0 18 18" fill="none" stroke={INK}><path d="M1 8l3-7 3 7M2 5.500h4" /><circle cx="13" cy="13" r="3" strokeWidth="2" /></svg>
          <span>文本</span>
        </SideTab>
        <SideTab $h={102}>
          <svg width="18" height="18" viewBox="0 0 18 18" fill="none" stroke={INK} strokeWidth="1.200"><path d="M2 6l3-4 5 1 6 6-5 6-6-4zM5 2l6-1M16 9l1 2-5 6-6-4" /></svg>
          <span>对象样式</span>
        </SideTab>
        <B name="添加泊坞窗" icon={I.plus} l={-2} r={0} />
      </DockerTabs>
    </DockerBody>
  </DockerWrap>
);

/* ---------- colour palette ---------- */

const PaletteCol = styled.aside`
  width: 21px;
  flex: none;
  display: flex;
  flex-direction: column;
  align-items: center;
  border-left: 1px solid ${RULE};
`;
const PaletteTop = styled.div`
  height: 64px;
  width: 100%;
  flex: none;
  display: flex;
  flex-direction: column;
  align-items: center;
  padding-top: 2px;
  gap: 7px;
`;
const PaletteGrip = styled.span`
  width: 15px;
  height: 5px;
  flex: none;
  background: radial-gradient(circle, #b4b4b4 1px, transparent 1px) 0 0 / 3px 3px;
`;
const Cells = styled.div`
  flex: 1;
  min-height: 0;
  width: 18px;
  overflow: hidden;
  border-top: 1px solid #555;
`;
const Cell = styled.button<{ $c: string }>`
  display: block;
  width: 18px;
  height: 17px;
  background: ${(p) => p.$c};
  border: 1px solid #555;
  border-top: 0;
`;
const PaletteEnd = styled.div`
  height: 41px;
  flex: none;
  display: flex;
  flex-direction: column;
  align-items: center;
  padding-top: 3px;
  gap: 8px;
`;
const DoubleChevron = () => (
  <svg width="11" height="10" viewBox="0 0 11 10" fill="none" stroke="#aaa" strokeWidth="1.400"><path d="M1 1l4 4-4 4M6 1l4 4-4 4" /></svg>
);

const palette = [
  '#231815', '#3e3a39', '#595757', '#727171', '#898989', '#9fa0a0', '#b5b5b6', '#c9caca', '#dcdddd', '#efefef',
  '#ffffff', '#1d2088', '#00a0e9', '#009944', '#fff100', '#e60012', '#e4007f', '#ae4084', '#f08300', '#f4b3b3',
  '#8a7367', '#d0cbe4', '#a79acb', '#6f8ccb', '#7a6ab0', '#9182ae', '#4c6490', '#59506f', '#7186a1', '#008cd6',
  '#9fd9f6', '#b6ccd8', '#96a9b1', '#717f86', '#495057', '#53756e', '#41897a', '#73999a', '#52a796', '#5aa572',
  '#5bbfcf', '#4fa8b5', '#b8cbbd', '#d6ecd9', '#a3d4ae',
];

/* ---------- status ---------- */

const StatusBar = styled.footer`
  height: 35px;
  flex: none;
  display: flex;
  align-items: center;
  padding: 0 11px 0 7px;
`;
const StatusText = styled.span<{ $l: number }>` margin-left: ${(p) => p.$l}px; `;
const StatusRight = styled.div`
  margin-left: auto;
  width: 478px;
  display: flex;
  align-items: center;
`;
const StatusFill = styled.span`
  width: 201px;
  flex: none;
  display: flex;
  align-items: center;
`;
const StatusIcon = styled.span`
  width: 20px;
  flex: none;
  display: flex;
  justify-content: center;
`;
const StatusSwatch = styled.span<{ $c: string }>`
  width: 22px;
  height: 22px;
  flex: none;
  margin-right: 4px;
  background: ${(p) => p.$c};
  border: 1px solid #999;
`;
const Cmyk = styled.span`
  display: flex;
  gap: 4px;
  margin-right: auto;
`;
const Ink = styled.span<{ $w: number }>`
  width: ${(p) => p.$w}px;
  display: flex;
  justify-content: space-between;
`;

/* ---------- overlays ---------- */

const Tooltip = styled.div`
  position: absolute;
  left: 602px;
  top: 127px;
  width: 68px;
  height: 42px;
  padding: 2px 0 0 5px;
  background: #fff;
  border: 1px solid #555;
  box-shadow: 3px 3px 2px rgba(0, 0, 0, 0.4);
  color: #444;
  line-height: 16px;
  strong { display: block; font-size: 14px; line-height: 17px; }
`;
const Marks = styled.svg`
  position: absolute;
  left: 0;
  top: 0;
  pointer-events: none;
  filter: drop-shadow(2px 2px 1px rgba(0, 0, 0, 0.35));
`;
const Ime = styled.div`
  position: absolute;
  right: 519px;
  bottom: 22px;
  width: 62px;
  height: 26px;
  display: flex;
  align-items: center;
  justify-content: center;
  gap: 4px;
  background: #fff;
  border: 1px solid #999;
  border-radius: 5px;
  box-shadow: 0 2px 3px rgba(0, 0, 0, 0.5);
  color: #333;
`;
const Watermark = styled.div`
  position: absolute;
  right: 11px;
  bottom: 6px;
  display: flex;
  align-items: center;
  opacity: 0.85;
  strong { display: block; font-size: 21px; line-height: 25px; color: #4a8fd0; }
  a { display: block; font-family: "Liberation Sans", sans-serif; font-weight: 700; font-size: 16px; line-height: 19px; color: #5cc08a; text-decoration: none; }
`;

export default function App() {
  return (
    <Shell>
      <Global />
      <TitleBar>
        <Logo />
        <span>CorelDRAW 2020 (64-Bit 评估版) - 未命名 -1*</span>
        <WindowButtons>
          <button aria-label="账户">
            <svg width="16" height="16" viewBox="0 0 16 16" fill="none" stroke={INK}><path d="M10 2.500H1.500v12h12V8" /><circle cx="7" cy="7" r="2" fill={INK} /><path d="M3 13l2-2h4l2 2z" fill={INK} /><path d="M12 1v3M10.500 2a2.800 2.800 0 1 0 3 0" stroke="#1aa04a" /></svg>
          </button>
          <button aria-label="最小化"><svg width="12" height="12" viewBox="0 0 12 12"><path d="M0 8h11v3H0z" /></svg></button>
          <button aria-label="还原"><svg width="14" height="14" viewBox="0 0 14 14" fill="none" stroke="#000" strokeWidth="1.500"><path d="M4 8H1V1h8v3M5 5h8v7H5z" /></svg></button>
          <button aria-label="关闭"><svg width="13" height="12" viewBox="0 0 13 12" stroke="#000" strokeWidth="2"><path d="M1 1l11 10M12 1L1 11" /></svg></button>
        </WindowButtons>
      </TitleBar>
      <MenuBar>
        {menus.map(([n, k]) => (
          <button key={n}>{n}{k && <>(<u>{k}</u>)</>}</button>
        ))}
      </MenuBar>
      <StandardBar />
      <PropertyBar />
      <Workspace>
        <Toolbox>
          {tools.map((t, i) =>
            t === '|' ? <ToolSep key={i} /> : (
              <IconButton key={i} aria-label={t} $mode={t === 'pick' ? 'boxed' : undefined}>
                {t === '字' ? <TextGlyph>字<Icon><Corner /></Icon></TextGlyph> : I[t]}
              </IconButton>
            ),
          )}
        </Toolbox>
        <Center>
          <DocTabs>
            <HomeTab aria-label="主页">
              <svg width="17" height="16" viewBox="0 0 17 16" fill={INK}><path d="M8.500 0L17 8.500h-2.500V16h-4v-5h-4v5h-4V8.500H0z" /></svg>
            </HomeTab>
            <Tab $w={91}>欢迎屏幕</Tab>
            <Tab $w={95} $on>未命名 -1*</Tab>
            <AddTab aria-label="新建标签"><svg width="12" height="12" viewBox="0 0 12 12" stroke="#aaa" strokeWidth="2"><path d="M6 0v12M0 6h12" /></svg></AddTab>
          </DocTabs>
          <RulerRow><HRuler /></RulerRow>
          <Stage>
            <VRuler><VerticalRuler /></VRuler>
            <StageMain>
              <CanvasRow>
                <Canvas><Drawing /></Canvas>
                <VScroll>
                  <ScrollButton aria-label="向上滚动"><Chevron dir="up" /></ScrollButton>
                  <VTrack><i /></VTrack>
                  <ScrollButton aria-label="向下滚动"><Chevron dir="down" /></ScrollButton>
                </VScroll>
              </CanvasRow>
              <PageBar>
                <PageNav>
                  <button aria-label="添加页"><svg width="10" height="12" viewBox="0 0 10 12" fill="none" stroke={INK}><path d="M3.500 1.500h5v9h-7v-7zM5 4.500v4M3 6.500h4" /></svg></button>
                  <button aria-label="第一页"><svg width="10" height="9" viewBox="0 0 10 9" fill="#b0b0b0"><path d="M0 0h1v9H0zM9 0v9L3 4.500z" /></svg></button>
                  <button aria-label="上一页"><Tri dir="left" size={9} color="#b0b0b0" /></button>
                  <PageCount>1 的 1</PageCount>
                  <button aria-label="下一页"><Tri dir="right" size={9} color="#b0b0b0" /></button>
                  <button aria-label="最后一页"><svg width="10" height="9" viewBox="0 0 10 9" fill="#b0b0b0"><path d="M9 0h1v9H9zM1 0v9l6-4.500z" /></svg></button>
                  <button aria-label="在后面添加页"><svg width="10" height="12" viewBox="0 0 10 12" fill="none" stroke={INK}><path d="M3.500 1.500h5v9h-7v-7zM5 4.500v4M3 6.500h4" /></svg></button>
                  <PageTab>
                    <svg width="48" height="17" viewBox="0 0 48 17"><path d="M0 0l5 16h38l5-16z" fill="#fff" /><path d="M0 .5h1l4 16h38l4-16h1" fill="none" stroke="#777" /></svg>
                    <span>页 1</span>
                  </PageTab>
                  <Push />
                  <Grip />
                </PageNav>
                <HScroll>
                  <ScrollButton aria-label="向左滚动"><Chevron dir="left" /></ScrollButton>
                  <HThumb />
                  <ScrollButton aria-label="向右滚动"><Chevron dir="right" /></ScrollButton>
                  <Navigator aria-label="导航器"><svg width="13" height="13" viewBox="0 0 13 13" fill="none" stroke={INK}><circle cx="5.500" cy="5.500" r="4.500" /><path d="M9 9l3.500 3.500M5.500 3v5M3 5.500h5" /></svg></Navigator>
                </HScroll>
              </PageBar>
            </StageMain>
          </Stage>
          <ColorRow>
            <Grip />
            <Arrow $r={0} aria-label="文档调色板"><Tri dir="right" /></Arrow>
            <DropperButton aria-label="吸取颜色">
              <svg width="14" height="14" viewBox="0 0 14 14" fill="none" stroke={INK}><path d="M2 12l6-6" strokeWidth="3" /><path d="M2 12l4-4" stroke="#e8641b" /><circle cx="10.500" cy="3.500" r="2.500" fill={INK} stroke="none" /></svg>
            </DropperButton>
            <Arrow $r={0} aria-label="向左"><Chevron dir="left" color="#c8c8c8" /></Arrow>
            <NoneSwatch aria-label="无颜色"><Slash w={16} h={16} /></NoneSwatch>
            <p>将颜色(或对象)拖动至此处，以便将这些颜色与文档存储在一起</p>
            <Arrow $r={3} aria-label="向右"><Chevron dir="right" color="#c8c8c8" /></Arrow>
            <DoubleChevron />
          </ColorRow>
        </Center>
        <TextDocker />
        <PaletteCol>
          <PaletteTop>
            <PaletteGrip />
            <Tri dir="right" size={9} color="#888" />
            <svg width="13" height="13" viewBox="0 0 13 13" fill="none" stroke="#aaa"><path d="M1.500 12l6-6" strokeWidth="2" /><circle cx="10" cy="3" r="2.500" fill="#aaa" stroke="none" /></svg>
            <Chevron dir="up" color="#c8c8c8" />
          </PaletteTop>
          <Cells>
            <Cell aria-label="无" $c="#fff"><Slash w={16} h={16} /></Cell>
            {palette.map((c) => <Cell key={c} aria-label={c} $c={c} />)}
          </Cells>
          <PaletteEnd><Chevron dir="down" color="#aaa" /><DoubleChevron /></PaletteEnd>
        </PaletteCol>
      </Workspace>
      <StatusBar>
        <IconButton aria-label="状态栏选项">{I.gear}</IconButton>
        <StatusText $l={5}>单击对象两次可旋转/倾斜；双击工具可选择所有对象；按住 Shift 键单击可选择多个对象；按住 Alt 键单击可进行挖掘；按住 Ctrl 并单击可在组中选择</StatusText>
        <StatusText $l={21}>椭圆形 于 图层 1</StatusText>
        <StatusRight>
          <StatusFill>
            <StatusIcon>
              <Icon><path d="M11.500 4.500l-7 8 7 7 7-7z" /><path d="M12 4.500l7 7.500" strokeWidth="3" /><path d="M8 13h7l-3.500 3.500z" fill={RED} stroke="none" /><path d="M20 13v6h-4z" fill={RED} stroke="none" /></Icon>
            </StatusIcon>
            <StatusSwatch $c="#fff"><Slash w={20} h={20} sw={2} color="#d01010" /></StatusSwatch>
            无
          </StatusFill>
          <StatusIcon>{I.pen}</StatusIcon>
          <StatusSwatch $c="#231815" />
          <Cmyk>
            {[['C:', '0'], ['M:', '0'], ['Y:', '0'], ['K:', '100']].map(([k, v]) => (
              <Ink key={k} $w={k === 'K:' ? 40 : 30}><span>{k}</span><span>{v}</span></Ink>
            ))}
          </Cmyk>
          <svg width="16" height="16" viewBox="0 0 16 16"><path d="M0 0h16v13H0z" fill="#222" /><path d="M1 1h14v6H1z" fill="red" /><path d="M1 7h14v5H1z" fill="#00a2d8" /><circle cx="8" cy="7" r="3" fill="#eee" stroke="#333" /><path d="M2 15h12v1H2z" /></svg>
        </StatusRight>
      </StatusBar>

      <Tooltip role="tooltip"><strong>饼形</strong>绘制饼形.</Tooltip>
      <Marks width="1000" height="560" fill="#f50a0a" aria-hidden="true">
        <path d="M578 107L579 135L573.500 131.500L557 205Q555.500 206 555 203L570.500 130L566 132z" />
        <path d="M701 108L717 129L711.500 129.500L734 181Q733 183 732 182L708.500 131L703 135z" />
        <path d="M661 472L636 482L638 476.500L529 493Q527 492 528 491L637.500 473.500L634 468z" />
        <path d="M592.500 107.500v16l3.500-3 3 6 2.500-1.500-3-6h5z" fill="#fff" stroke="#222" />
      </Marks>
      <Ime><span>EN</span><svg width="11" height="13" viewBox="0 0 11 13" fill="none" stroke="#333"><path d="M5 1c5 2 6 8 0 11H1c4-3 5-6 4-11z" /></svg><span>简</span></Ime>
      <Watermark>
        <svg width="44" height="42" viewBox="0 0 44 42">
          <path d="M2 27C0 14 14 3 40 0 22 6 12 12 12 22c0 4 2 7 5 9-6 2-13 1-15-4z" fill="#4a9bd8" />
          <path d="M14 21c2-8 12-12 18-7 5 5 2 13-6 16-5 2-10 1-11-2 8 2 14-3 12-8-2-4-8-4-13 1z" fill="#6db5e8" />
          <path d="M34 13c8 5 6 18-6 23-6 3-14 5-24 5 14-3 26-9 29-17 1-4 1-7 1-11z" fill="#5fc48c" />
        </svg>
        <div><strong>极光下载站</strong><a href="#xz7">www.xz7.com</a></div>
      </Watermark>
    </Shell>
  );
}
